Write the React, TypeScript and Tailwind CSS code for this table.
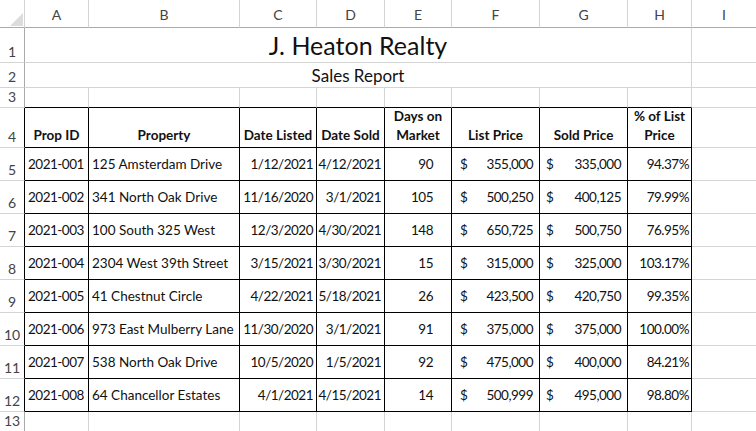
import React from "react";

const COLS = ["A", "B", "C", "D", "E", "F", "G", "H", "I"];

type Row = {
  id: string;
  property: string;
  listed: string;
  sold: string;
  days: number;
  listPrice: string;
  soldPrice: string;
  pct: string;
};

const rows: Row[] = [
  { id: "2021-001", property: "125 Amsterdam Drive", listed: "1/12/2021", sold: "4/12/2021", days: 90, listPrice: "355,000", soldPrice: "335,000", pct: "94.37%" },
  { id: "2021-002", property: "341 North Oak Drive", listed: "11/16/2020", sold: "3/1/2021", days: 105, listPrice: "500,250", soldPrice: "400,125", pct: "79.99%" },
  { id: "2021-003", property: "100 South 325 West", listed: "12/3/2020", sold: "4/30/2021", days: 148, listPrice: "650,725", soldPrice: "500,750", pct: "76.95%" },
  { id: "2021-004", property: "2304 West 39th Street", listed: "3/15/2021", sold: "3/30/2021", days: 15, listPrice: "315,000", soldPrice: "325,000", pct: "103.17%" },
  { id: "2021-005", property: "41 Chestnut Circle", listed: "4/22/2021", sold: "5/18/2021", days: 26, listPrice: "423,500", soldPrice: "420,750", pct: "99.35%" },
  { id: "2021-006", property: "973 East Mulberry Lane", listed: "11/30/2020", sold: "3/1/2021", days: 91, listPrice: "375,000", soldPrice: "375,000", pct: "100.00%" },
  { id: "2021-007", property: "538 North Oak Drive", listed: "10/5/2020", sold: "1/5/2021", days: 92, listPrice: "475,000", soldPrice: "400,000", pct: "84.21%" },
  { id: "2021-008", property: "64 Chancellor Estates", listed: "4/1/2021", sold: "4/15/2021", days: 14, listPrice: "500,999", soldPrice: "495,000", pct: "98.80%" },
];

// grid lines: black inside the table, light gray elsewhere
function Cell({ black, bottomBlack, className = "", children }: { black?: boolean; bottomBlack?: boolean; className?: string; children?: React.ReactNode }) {
  return (
    <div
      className={`border-r border-b overflow-hidden whitespace-nowrap ${black ? "border-r-black" : "border-r-[#d4d4d4]"} ${
        bottomBlack ? "border-b-black" : "border-b-[#d4d4d4]"
      } ${className}`}
    >
      {children}
    </div>
  );
}

function RowHead({ n, dark }: { n: number; dark?: boolean }) {
  return (
    <div
      className={`border-r border-b border-b-[#d4d4d4] ${dark ? "border-r-black" : "border-r-[#ababab]"} flex items-end justify-center pb-[3px] text-[14px] leading-none text-[#444]`}
    >
      {n}
    </div>
  );
}

// numbers in Lato run wider than Calibri, so tighten them a bit
const num = "text-[13.5px] tracking-[-0.5px]";

export default function App() {
  return (
    <div className="w-[756px] h-[431px] overflow-hidden bg-white text-[#111]" style={{ fontFamily: "Lato, 'Liberation Sans', sans-serif" }}>
      <div className="grid grid-cols-[25px_64px_151px_77px_68px_67px_88px_88px_64px_65px] grid-rows-[28px_35px_25px_20px_40px_repeat(8,33px)_20px_20px]">
        {/* column headers */}
        <div className="border-r border-b border-r-[#d4d4d4] border-b-[#ababab] relative">
          <svg className="absolute left-[10px] top-[13px]" width="13" height="13" viewBox="0 0 13 13">
            <polygon points="13,0 13,13 0,13" fill="#dcdcdc" />
          </svg>
        </div>
        {COLS.map((c) => (
          <div key={c} className="border-r border-b border-r-[#d4d4d4] border-b-[#ababab] flex items-center justify-center pt-[2px] text-[14px] text-[#444]">
            {c}
          </div>
        ))}

        {/* row 1 */}
        <RowHead n={1} />
        <Cell className="col-span-8 flex items-end justify-center pb-[4px] text-[25px] leading-none">J. Heaton Realty</Cell>
        <Cell />

        {/* row 2 */}
        <RowHead n={2} />
        <Cell className="col-span-8 flex items-end justify-center pb-[3px] text-[17px] leading-none">Sales Report</Cell>
        <Cell />

        {/* row 3 */}
        <RowHead n={3} />
        {COLS.slice(0, 8).map((c) => (
          <Cell key={c} bottomBlack />
        ))}
        <Cell />

        {/* row 4: table headers */}
        <RowHead n={4} dark />
        {["Prop ID", "Property", "Date Listed", "Date Sold", "Days on\nMarket", "List Price", "Sold Price", "% of List\nPrice"].map((h) => (
          <Cell key={h} black bottomBlack className="flex items-end justify-center pb-[2px] text-center font-bold text-[13.5px] leading-[19px] whitespace-pre">
            {h}
          </Cell>
        ))}
        <Cell />

        {rows.map((r, i) => (
          <React.Fragment key={r.id}>
            <RowHead n={i + 5} dark />
            <Cell black bottomBlack className={`flex items-center pl-[3px] ${num}`}>{r.id}</Cell>
            <Cell black bottomBlack className="flex items-center pl-[3px] text-[13.5px]">{r.property}</Cell>
            <Cell black bottomBlack className={`flex items-center justify-end pr-[3px] ${num}`}>{r.listed}</Cell>
            <Cell black bottomBlack className={`flex items-center justify-end pr-[3px] ${num}`}>{r.sold}</Cell>
            <Cell black bottomBlack className={`flex items-center justify-end pr-[18px] ${num}`}>{r.days}</Cell>
            <Cell black bottomBlack className={`flex items-center justify-between pl-[8px] pr-[6px] ${num}`}>
              <span>$</span>
              <span>{r.listPrice}</span>
            </Cell>
            <Cell black bottomBlack className={`flex items-center justify-between pl-[6px] pr-[6px] ${num}`}>
              <span>$</span>
              <span>{r.soldPrice}</span>
            </Cell>
            <Cell black bottomBlack className={`flex items-center justify-end pr-[2px] ${num}`}>{r.pct}</Cell>
            <Cell />
          </React.Fragment>
        ))}

        {/* rows 13-14 */}
        {[13, 14].map((n) => (
          <React.Fragment key={n}>
            <RowHead n={n} />
            {COLS.map((c) => (
              <Cell key={c} />
            ))}
          </React.Fragment>
        ))}
      </div>
    </div>
  );
}
